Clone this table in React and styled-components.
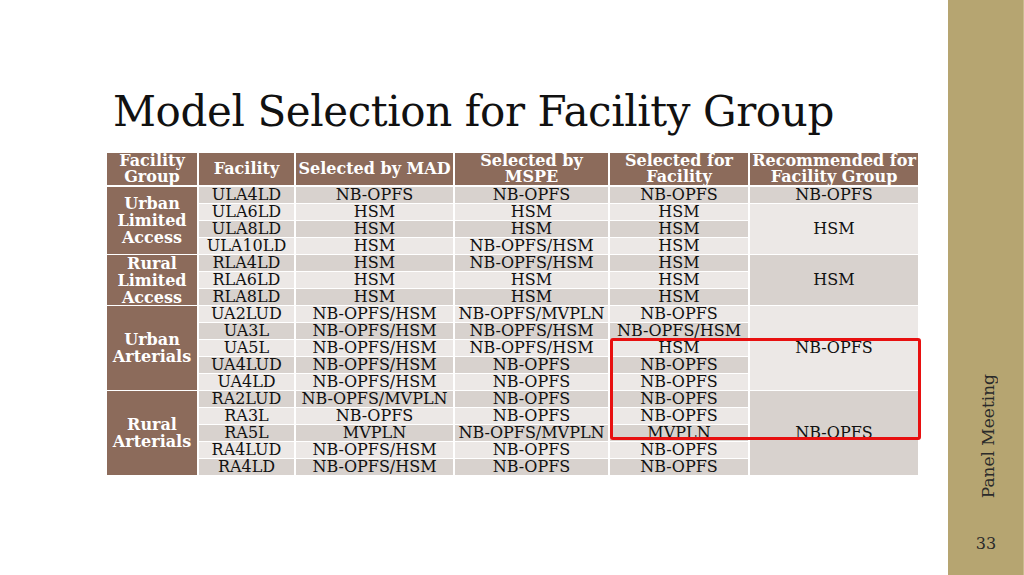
import React from "react";
import styled, { createGlobalStyle } from "styled-components";

const Global = createGlobalStyle`
  html, body { margin: 0; padding: 0; background: #fff; }
  body { width: 1024px; height: 575px; overflow: hidden; }
`;

const Page = styled.div`
  display: flex;
  width: 1024px;
  height: 575px;
  font-family: "DejaVu Serif", "Liberation Serif", serif;
  color: #111;
`;

const Main = styled.main`
  flex: 1;
  display: flex;
  flex-direction: column;
  padding: 84px 0 0 107px;
`;

const Title = styled.h1`
  margin: 0 0 0 6px;
  font-weight: normal;
  font-size: 42px;
  line-height: 56px;
  letter-spacing: -0.4px;
  color: #111;
`;

const TableWrap = styled.div`
  position: relative;
  margin-top: 13px;
  width: 811px;
`;

const Grid = styled.div`
  display: grid;
  grid-template-columns: 90px 95px 157px 153px 138px 168px;
  grid-template-rows: 33px repeat(17, 16px);
  column-gap: 2px;
  row-gap: 1px;
  background: #fff;
`;

const HeadCell = styled.div`
  background: #8c6b5b;
  color: #fff;
  font-weight: bold;
  font-size: 16px;
  line-height: 16px;
  margin-bottom: 1px;
  display: flex;
  align-items: center;
  justify-content: center;
  text-align: center;
  white-space: nowrap;
`;

const GroupCell = styled.div`
  grid-row: span ${(p) => p.$span};
  background: #8c6b5b;
  color: #fff;
  font-weight: bold;
  font-size: 16px;
  line-height: 17px;
  display: flex;
  align-items: center;
  justify-content: center;
  text-align: center;
`;

const Cell = styled.div`
  grid-row: span ${(p) => p.$span || 1};
  background: ${(p) => (p.$dark ? "#d8d2ce" : "#ece8e6")};
  font-size: 16px;
  line-height: 16px;
  display: flex;
  align-items: center;
  justify-content: center;
  white-space: nowrap;
  color: #111;
`;

const Highlight = styled.div`
  position: absolute;
  left: 503px;
  top: 185px;
  width: 305px;
  height: 96px;
  border: 3px solid #e81010;
  border-radius: 3px;
  pointer-events: none;
`;

const Side = styled.aside`
  width: 76px;
  background: #b6a571;
  display: flex;
  flex-direction: column;
  align-items: center;
  justify-content: flex-end;
  padding-bottom: 22px;
  box-sizing: border-box;
  border-right: 1px solid #c9bb8e;
`;

const SideLabel = styled.div`
  writing-mode: vertical-rl;
  transform: rotate(180deg);
  font-size: 17px;
  color: #2a2a2a;
  margin-bottom: 36px;
  margin-left: 4px;
`;

const PageNum = styled.div`
  font-size: 16px;
  color: #2a2a2a;
  margin-left: 1px;
`;

const groups = [
  {
    name: ["Urban", "Limited", "Access"],
    rows: [
      ["ULA4LD", "NB-OPFS", "NB-OPFS", "NB-OPFS"],
      ["ULA6LD", "HSM", "HSM", "HSM"],
      ["ULA8LD", "HSM", "HSM", "HSM"],
      ["ULA10LD", "HSM", "NB-OPFS/HSM", "HSM"],
    ],
    rec: [
      ["NB-OPFS", 1],
      ["HSM", 3],
    ],
  },
  {
    name: ["Rural", "Limited", "Access"],
    rows: [
      ["RLA4LD", "HSM", "NB-OPFS/HSM", "HSM"],
      ["RLA6LD", "HSM", "HSM", "HSM"],
      ["RLA8LD", "HSM", "HSM", "HSM"],
    ],
    rec: [["HSM", 3]],
  },
  {
    name: ["Urban", "Arterials"],
    rows: [
      ["UA2LUD", "NB-OPFS/HSM", "NB-OPFS/MVPLN", "NB-OPFS"],
      ["UA3L", "NB-OPFS/HSM", "NB-OPFS/HSM", "NB-OPFS/HSM"],
      ["UA5L", "NB-OPFS/HSM", "NB-OPFS/HSM", "HSM"],
      ["UA4LUD", "NB-OPFS/HSM", "NB-OPFS", "NB-OPFS"],
      ["UA4LD", "NB-OPFS/HSM", "NB-OPFS", "NB-OPFS"],
    ],
    rec: [["NB-OPFS", 5]],
  },
  {
    name: ["Rural", "Arterials"],
    rows: [
      ["RA2LUD", "NB-OPFS/MVPLN", "NB-OPFS", "NB-OPFS"],
      ["RA3L", "NB-OPFS", "NB-OPFS", "NB-OPFS"],
      ["RA5L", "MVPLN", "NB-OPFS/MVPLN", "MVPLN"],
      ["RA4LUD", "NB-OPFS/HSM", "NB-OPFS", "NB-OPFS"],
      ["RA4LD", "NB-OPFS/HSM", "NB-OPFS", "NB-OPFS"],
    ],
    rec: [["NB-OPFS", 5]],
  },
];

const headers = [
  ["Facility", "Group"],
  ["Facility"],
  ["Selected by MAD"],
  ["Selected by", "MSPE"],
  ["Selected for", "Facility"],
  ["Recommended for", "Facility Group"],
];

function Lines({ lines }) {
  return (
    <span>
      {lines.map((l, i) => (
        <React.Fragment key={i}>
          {i > 0 && <br />}
          {l}
        </React.Fragment>
      ))}
    </span>
  );
}

export default function App() {
  const cells = [];
  let rowIndex = 0;
  groups.forEach((g, gi) => {
    const recStarts = {};
    let acc = 0;
    g.rec.forEach(([text, span]) => {
      recStarts[acc] = [text, span];
      acc += span;
    });
    g.rows.forEach((r, ri) => {
      const dark = rowIndex % 2 === 0;
      if (ri === 0) {
        cells.push(
          <GroupCell key={`g${gi}`} $span={g.rows.length}>
            <Lines lines={g.name} />
          </GroupCell>
        );
      }
      r.forEach((v, ci) => {
        cells.push(
          <Cell key={`c${rowIndex}-${ci}`} $dark={dark}>
            {v}
          </Cell>
        );
      });
      if (recStarts[ri]) {
        const [text, span] = recStarts[ri];
        cells.push(
          <Cell key={`r${rowIndex}`} $dark={dark} $span={span}>
            {text}
          </Cell>
        );
      }
      rowIndex += 1;
    });
  });

  return (
    <>
      <Global />
      <Page>
        <Main>
          <Title>Model Selection for Facility Group</Title>
          <TableWrap>
            <Grid>
              {headers.map((h, i) => (
                <HeadCell key={i}>
                  <Lines lines={h} />
                </HeadCell>
              ))}
              {cells}
            </Grid>
            <Highlight />
          </TableWrap>
        </Main>
        <Side>
          <SideLabel>Panel Meeting</SideLabel>
          <PageNum>33</PageNum>
        </Side>
      </Page>
    </>
  );
}
